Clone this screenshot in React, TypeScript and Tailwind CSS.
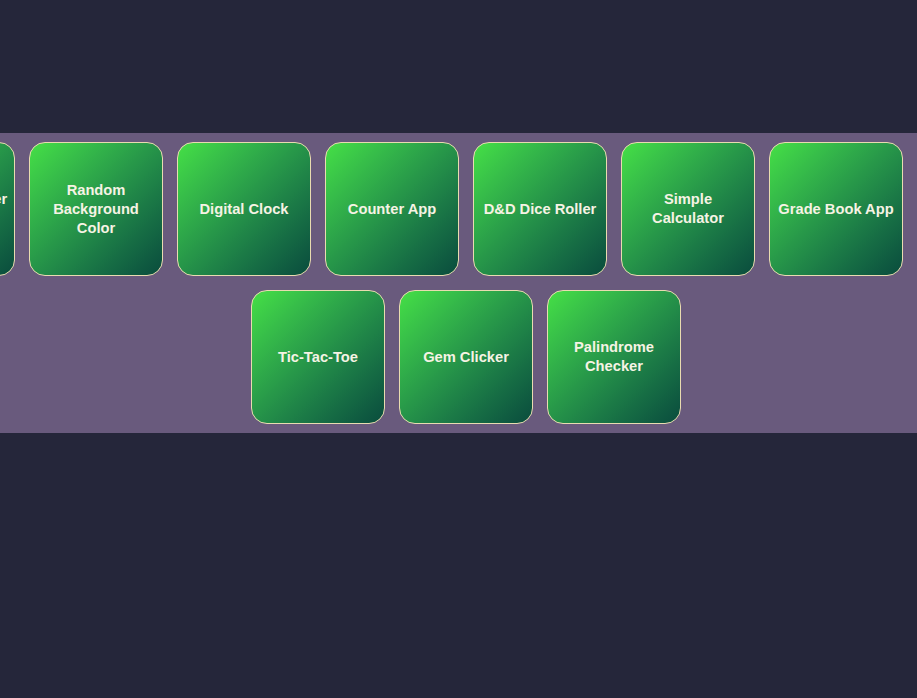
import React from 'react';

const projects = [
  'Random Number Generator',
  'Random Background Color',
  'Digital Clock',
  'Counter App',
  'D&D Dice Roller',
  'Simple Calculator',
  'Grade Book App',
  'Tip Calculator',
  'Tic-Tac-Toe',
  'Gem Clicker',
  'Palindrome Checker',
];

const ProjectCard: React.FC<{ title: string }> = ({ title }) => (
  <a
    href="#"
    className="flex items-center justify-center w-[134px] h-[134px] shrink-0 rounded-2xl border border-[#e9dcb0] bg-linear-to-br from-[#45e045] to-[#0a4c3d] px-[6px] text-center text-[14.7px] leading-[19px] font-bold text-[#f6f3e4]"
  >
    {title}
  </a>
);

export default function App() {
  return (
    <div className="min-h-screen bg-[#25263a] pt-[133px] font-['Liberation_Sans',Arial,sans-serif]">
      <section className="overflow-hidden bg-[#695a7d] py-[9px]">
        <div className="flex flex-wrap justify-center gap-[14px] w-[1200px] -ml-[134px]">
          {projects.map((p) => (
            <ProjectCard key={p} title={p} />
          ))}
        </div>
      </section>
    </div>
  );
}
